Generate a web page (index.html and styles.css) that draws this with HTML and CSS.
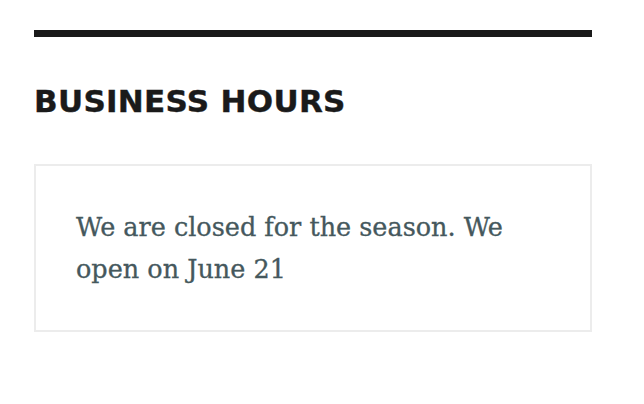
FILE: index.html
```html
<!DOCTYPE html>
<html>
<head>
<meta charset="utf-8">
<link rel="stylesheet" href="styles.css">
</head>
<body>
<section class="widget">
  <h2 class="widget-title">Business Hours</h2>
  <div class="box">
    <p class="note">We are closed for the season. We open on June 21</p>
  </div>
</section>
</body>
</html>
```
FILE: styles.css
```css
html, body {
  margin: 0;
  padding: 0;
  background: #ffffff;
}
.widget {
  width: 558px;
  margin: 30px 0 0 34px;
  border-top: 7px solid #1a1a1a;
}
.widget-title {
  margin: 46px 0 0 0;
  font-family: "DejaVu Sans", sans-serif;
  font-weight: 700;
  font-size: 31px;
  line-height: 36px;
  text-transform: uppercase;
  color: #1a1a1a;
  letter-spacing: 0.3px;
  -webkit-text-stroke: 0.4px #1a1a1a;
}
.box {
  margin-top: 45px;
  border: 2px solid #ececec;
  padding: 40px 40px 40px 40px;
}
.note {
  margin: 0;
  font-family: "DejaVu Serif", serif;
  font-size: 25.5px;
  line-height: 42px;
  color: #45585d;
  -webkit-text-stroke: 0.3px #45585d;
}
```
